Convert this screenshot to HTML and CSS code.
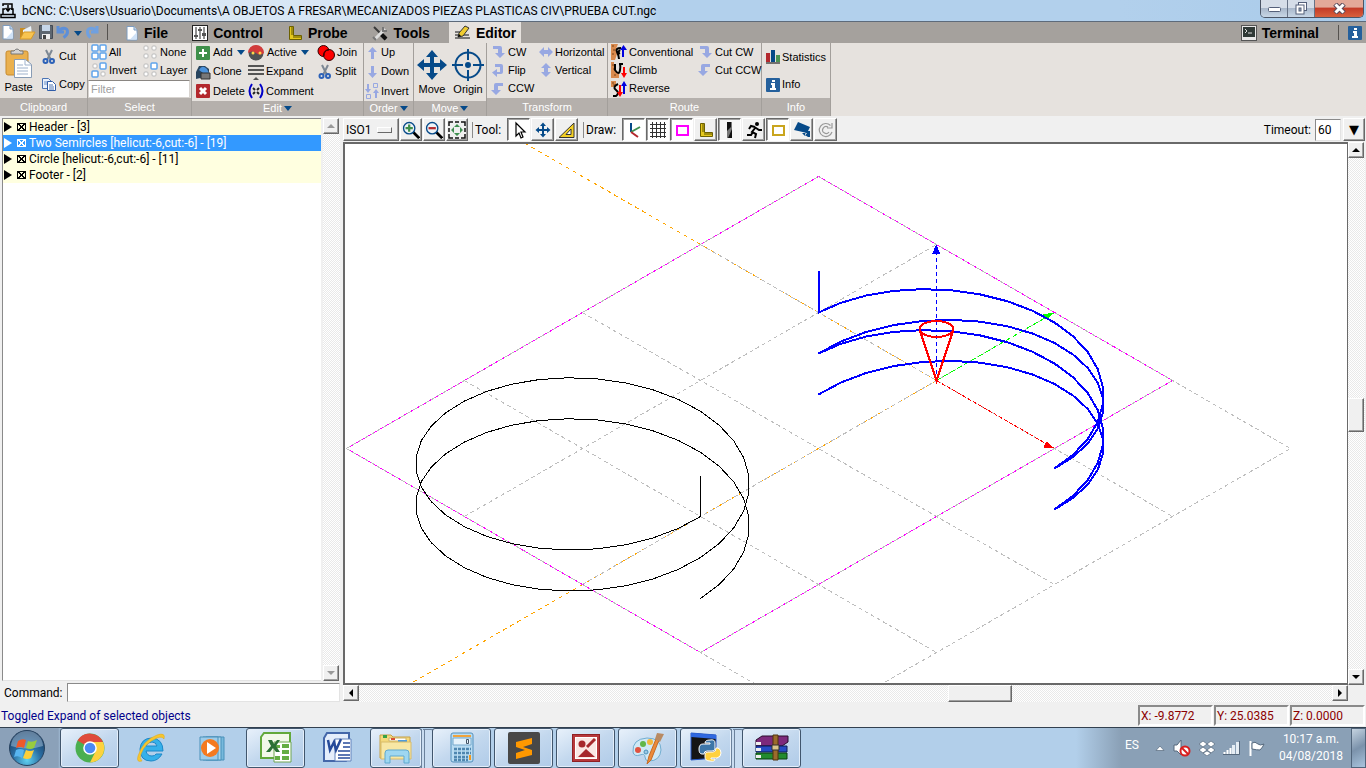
FILE: index.html
```html
<!DOCTYPE html>
<html lang="en">
<head>
    <meta charset="UTF-8">
    <meta name="viewport" content="width=device-width, initial-scale=1.0">
    <title>bCNC</title>
    <link rel="stylesheet" href="styles.css">
</head>
<body>
    <!-- icons used more than once -->
    <svg class="defs">
        <symbol id="i-new" viewBox="0 0 16 16"><path d="M3 1.500h7l3 3.500v10H3z" fill="#fff" stroke="#7d9cc0"/><path d="M10 1.500v3.500h3" fill="#c7dcf2" stroke="#7d9cc0"/><path d="M6 14.500h7V7z" fill="#cfe2f7"/></symbol>
        <symbol id="i-scissors" viewBox="0 0 16 16"><path d="M5 1l5 10M11 1L6 11" stroke="#7d8894" stroke-width="2"/><circle cx="4.500" cy="12" r="2" fill="none" stroke="#2d62b8" stroke-width="2"/><circle cx="11" cy="12" r="2" fill="none" stroke="#2d62b8" stroke-width="2"/></symbol>
        <symbol id="i-info" viewBox="0 0 14 14"><rect width="14" height="14" rx="1" fill="#25609c"/><path d="M6 2h3v2H6zM5 5h4v5h1v2H4v-2h2V7H5z" fill="#fff"/></symbol>
        <symbol id="i-cw" viewBox="0 0 16 16"><path d="M3 2h7q2 0 2 2v5h3l-5 5-5-5h3V5H3z" fill="#98a8e2"/></symbol>
        <symbol id="i-ccw" viewBox="0 0 16 16"><path d="M13 2H6Q4 2 4 4v5H1l5 5 5-5H8V5h5z" fill="#98a8e2"/></symbol>
        <symbol id="i-down" viewBox="0 0 16 16"><path d="M7 2h3v7h3l-4.500 5L4 9h3z" fill="#98a8e2"/></symbol>
        <symbol id="i-move" viewBox="0 0 32 32"><path d="M16 1l6 7h-4v6h6v-4l7 6-7 6v-4h-6v6h4l-6 7-6-7h4v-6H8v4l-7-6 7-6v4h6V8h-4z" fill="#064a89"/></symbol>
        <symbol id="i-ruler" viewBox="0 0 16 16"><path d="M2.500 1.500h4v9h8v4h-12z" fill="#e5c81c" stroke="#6c6000"/><path d="M4 3h2M4 5h2M4 7h2M4 9h2M7 13v-2M9 13v-2M11 13v-2M13 13v-2" stroke="#5d5200"/></symbol>
        <symbol id="i-lens" viewBox="0 0 20 20"><path d="M12 12l7 7" stroke="#000" stroke-width="3"/><circle cx="8" cy="8" r="6.200" fill="#eef3f7" stroke="#064a89" stroke-width="1.500"/></symbol>
    </svg>

    <header class="titlebar">
        <svg class="app-icon" width="17" height="17" viewBox="0 0 17 17"><path d="M3 4V2h9v6M5.500 6L8 9l2.500-3M8 3v5M3 12V7h2M11 7h2v5M1 12.500h14v3H1z" fill="none" stroke="#000" stroke-width="1.500"/></svg>
        <h1>bCNC: C:\Users\Usuario\Documents\A OBJETOS A FRESAR\MECANIZADOS PIEZAS PLASTICAS CIV\PRUEBA CUT.ngc</h1>
        <div class="window-buttons">
            <button aria-label="Minimize"><svg width="13" height="9"><rect x=".5" y="3.500" width="12" height="4" rx="1" fill="#fff" stroke="#55607a"/></svg></button>
            <button aria-label="Restore"><svg width="13" height="13"><rect x="3.500" y=".5" width="8" height="8" fill="#fff" stroke="#55607a"/><rect x="1" y="3" width="8" height="9" fill="#fff" stroke="#55607a"/><rect x="4" y="6" width="2" height="3" fill="#9ab" stroke="#55607a"/></svg></button>
            <button class="close" aria-label="Close"><svg width="13" height="11"><path d="M2 1l9 9M11 1l-9 9" stroke="#5a4a5a" stroke-width="5"/><path d="M2.500 1.500l8 8M10.500 1.500l-8 8" stroke="#fff" stroke-width="3"/></svg></button>
        </div>
    </header>

    <nav class="tabbar">
        <div class="quick">
            <button aria-label="New"><svg width="16" height="16"><use href="#i-new"/></svg></button>
            <button aria-label="Open"><svg width="18" height="16"><path d="M2 14V4h5l1 2h6v8z" fill="#c98c20"/><path d="M5 6l8-4 1 8-9 2z" fill="#e9f1f8"/><path d="M2 15L6 8h11l-4 7z" fill="#f8c450" stroke="#d79a28"/></svg></button>
            <button aria-label="Save"><svg width="16" height="16"><path d="M1.500 1.500h13v13h-13z" fill="#5d6670" stroke="#444b55"/><path d="M4 1h8v6H4z" fill="#c6d6e8"/><path d="M4 10h8v5H4z" fill="#eee"/><path d="M5 11h3v4H5z" fill="#444"/></svg></button>
            <button aria-label="Undo"><svg width="14" height="16"><path d="M2 2v6h6M2.500 7.500C5 3 12 3 11.500 8c0 3-2 4-4 5.500" fill="none" stroke="#5d8fd8" stroke-width="3"/></svg></button>
            <button aria-label="Undo list"><i class="caret"></i></button>
            <button aria-label="Redo"><svg width="16" height="16"><path d="M13 2v6H7M12.500 7.500C10 3 3 3 3.500 8c0 3 1 4 3 5.500" fill="none" stroke="#6fa0e0" stroke-width="3"/></svg></button>
        </div>
        <button class="tab"><svg width="14" height="16" viewBox="1 0 14 16"><use href="#i-new" width="16" height="16"/></svg>File</button>
        <button class="tab"><svg width="16" height="16"><rect x=".5" y=".5" width="15" height="15" fill="#fff" stroke="#222"/><path d="M4 2v12M8 2v12M12 2v12" stroke="#222"/><path d="M2 10h4v2H2zM6 4h4v2H6zM10 8h4v3h-4z" fill="#555"/></svg>Control</button>
        <button class="tab"><svg width="16" height="16"><use href="#i-ruler"/></svg>Probe</button>
        <button class="tab"><svg width="17" height="16"><path d="M2 2l12 12" stroke="#3a3a3a" stroke-width="2"/><path d="M9 9l5 5" stroke="#111" stroke-width="4"/><path d="M3 14L13 4" stroke="#ddd" stroke-width="3"/><path d="M11 2v4h4M1 12l3 3" fill="none" stroke="#777" stroke-width="2"/></svg>Tools</button>
        <button class="tab active"><svg width="17" height="16"><path d="M1 7h5M1 10h14M1 13h15" stroke="#555" stroke-width="1.500"/><path d="M4 12l1-4 6-7 4 2-6 8z" fill="#f0cc30" stroke="#333"/><path d="M4 12l1-3 2 2z" fill="#000"/></svg>Editor</button>
        <div class="tabbar-right">
            <button class="tab"><svg width="16" height="16"><rect x=".5" y=".5" width="15" height="15" fill="#e8e8e8" stroke="#555"/><path d="M2 2h12v10H2z" fill="#2f3936"/><path d="M4 4l2 2-2 2M7 8h4" fill="none" stroke="#ddd"/></svg>Terminal</button>
            <button class="about" aria-label="About"><svg width="14" height="14"><use href="#i-info"/></svg></button>
        </div>
    </nav>

    <section class="ribbon">
        <div class="group clipboard">
            <div class="tools">
                <button class="big"><svg width="32" height="32"><rect x="3" y="4" width="22" height="24" rx="2" fill="#eab04e" stroke="#c78a2c"/><path d="M8 7V4h3q3-4 6 0h3v3z" fill="#d4d4d4" stroke="#777"/><path d="M11.500 12.500h11l6 5v13h-17z" fill="#fff" stroke="#889cb5"/><path d="M22 12v6h6M14 18h6M14 21h11M14 24h11M14 27h11" fill="none" stroke="#9fb2cc"/></svg>Paste</button>
                <button><svg width="16" height="16"><use href="#i-scissors"/></svg>Cut</button>
                <button><svg width="16" height="16"><path d="M1.500 2.500h6l3 3v7h-9z" fill="#e8f0fb" stroke="#4c74b4"/><path d="M3 6h5M3 8h5" stroke="#6d90c8"/><path d="M6.500 5.500h5l3 3v6h-8z" fill="#fff" stroke="#2f5ca8"/><path d="M8 9h4M8 11h5M8 13h5" stroke="#4c74b4"/></svg>Copy</button>
            </div>
            <div class="caption">Clipboard</div>
        </div>
        <div class="group select">
            <div class="tools">
                <button><svg width="16" height="16" fill="#fff" stroke="#5fa4ec" stroke-width="1.500"><rect x="1" y="1" width="6" height="6" rx="1"/><rect x="9" y="1" width="6" height="6" rx="1"/><rect x="1" y="9" width="6" height="6" rx="1"/><rect x="9" y="9" width="6" height="6" rx="1"/></svg>All</button>
                <button><svg width="16" height="16" fill="#fff" stroke="#bbb"><rect x="2" y="2" width="4" height="4" rx="1"/><rect x="10" y="2" width="4" height="4" rx="1"/><rect x="2" y="10" width="4" height="4" rx="1"/><rect x="10" y="10" width="4" height="4" rx="1"/></svg>None</button>
                <button><svg width="16" height="16" fill="#fff" stroke="#bbb"><rect x="2" y="2" width="4" height="4" rx="1"/><rect x="10" y="10" width="4" height="4" rx="1"/><g stroke="#5fa4ec" stroke-width="1.500"><rect x="9" y="1" width="6" height="6" rx="1"/><rect x="1" y="9" width="6" height="6" rx="1"/></g></svg>Invert</button>
                <button><svg width="16" height="16" fill="#fff" stroke="#bbb"><rect x="2" y="2" width="4" height="4" rx="1"/><rect x="2" y="10" width="4" height="4" rx="1"/><rect x="10" y="10" width="4" height="4" rx="1"/><rect x="9" y="1" width="6" height="6" rx="1" stroke="#5fa4ec" stroke-width="1.500"/></svg>Layer</button>
                <input type="text" placeholder="Filter" aria-label="Filter">
            </div>
            <div class="caption">Select</div>
        </div>
        <div class="group edit">
            <div class="tools">
                <button><svg width="16" height="16"><rect x="1" y="1" width="14" height="14" rx="1" fill="#3f8f4a"/><path d="M8 4v8M4 8h8" stroke="#fff" stroke-width="2"/></svg>Add<i class="caret"></i></button>
                <button><svg width="17" height="16"><circle cx="8" cy="8" r="7.500" fill="#4f5254"/><path d="M0 8a8 8 0 0 1 16 0q-4 3-8 0T0 8" fill="#d23b3b"/><circle cx="5" cy="8" r="1.500" fill="#ffd54a"/><circle cx="12" cy="8" r="1.500" fill="#ffd54a"/></svg>Active<i class="caret"></i></button>
                <button><svg width="18" height="16" fill="#f00" stroke="#300"><circle cx="6.500" cy="6" r="5.500"/><circle cx="12" cy="10" r="5.500"/><path d="M7 11q0-6 5-6" fill="none"/></svg>Join</button>
                <button><svg width="16" height="16"><path d="M1 15V8l3-6h6l4 3v7" fill="#29455f"/><path d="M4 6q3-6 8-1l2 4H8z" fill="#4c93dc"/><path d="M6 9h9v6H6z" fill="#777" stroke="#333"/></svg>Clone</button>
                <button><svg width="16" height="16"><path d="M0 2h16M0 6h16M0 10h16" stroke="#555" stroke-width="2"/><path d="M8 13l3 3H5z" fill="#555"/></svg>Expand</button>
                <button><svg width="16" height="16"><use href="#i-scissors"/></svg>Split</button>
                <button><svg width="16" height="16"><rect x="1" y="1" width="14" height="14" rx="1" fill="#b3282d"/><path d="M5 5l6 6M11 5l-6 6" stroke="#fff" stroke-width="3"/></svg>Delete</button>
                <button class="wide"><svg width="16" height="16"><path d="M4 1Q-1 8 4 15M12 1q5 7 0 14" fill="none" stroke="#0000c8" stroke-width="2"/><path d="M5 5l2 2M11 5L9 7M5 11l2-2M11 11L9 9" stroke="#222" stroke-width="2"/></svg>Comment</button>
            </div>
            <button class="caption">Edit<i class="caret"></i></button>
        </div>
        <div class="group order">
            <div class="tools">
                <button><svg width="14" height="16"><path d="M6 14h3V7h3L7.500 2 3 7h3z" fill="#98a8e2"/></svg>Up</button>
                <button><svg width="14" height="16" viewBox="1 0 14 16"><use href="#i-down" width="16" height="16"/></svg>Down</button>
                <button><svg width="14" height="16" fill="#98a8e2"><path d="M2 1h2v5h2L3 10 0 6h2zM10 15h2v-5h2l-3-4-3 4h2z"/><path d="M8.500 .5h4v4h-4zM1.500 11.500h4v4h-4z" fill="none" stroke="#98a8e2"/></svg>Invert</button>
            </div>
            <button class="caption">Order<i class="caret"></i></button>
        </div>
        <div class="group move">
            <div class="tools">
                <button class="big"><svg width="32" height="32"><use href="#i-move"/></svg>Move</button>
                <button class="big"><svg width="32" height="32" fill="none" stroke="#064a89" stroke-width="2"><circle cx="16" cy="16" r="12.500"/><path d="M16 0v11M16 21v11M0 16h11M21 16h11"/><circle cx="16" cy="16" r="2" fill="#064a89"/></svg>Origin</button>
            </div>
            <button class="caption">Move<i class="caret"></i></button>
        </div>
        <div class="group transform">
            <div class="tools">
                <button><svg width="16" height="16"><use href="#i-cw"/></svg>CW</button>
                <button><svg width="14" height="16"><path d="M0 8l5-5v3h4V3l5 5-5 5v-3H5v3z" fill="#98a8e2"/></svg>Horizontal</button>
                <button><svg width="16" height="16"><path d="M5 2h6q2 0 2 2v6q0 2-2 2H7v3L2 10.500 7 7v3h3V5H5z" fill="#98a8e2"/></svg>Flip</button>
                <button><svg width="14" height="16"><path d="M7 1l5 5H9v4h3l-5 5-5-5h3V6H2z" fill="#98a8e2"/></svg>Vertical</button>
                <button><svg width="16" height="16"><use href="#i-ccw"/></svg>CCW</button>
            </div>
            <div class="caption">Transform</div>
        </div>
        <div class="group route">
            <div class="tools">
                <button><svg width="16" height="16"><path d="M0 0h7l-2 5 1 5-2 6H0z" fill="#d98a4e"/><path d="M1 2h2M2 6h2M1 10h2" stroke="#7b4518"/><path d="M10 4Q4 4 6 8t2 7M9 6q-5 5 0 3" fill="none" stroke="#000" stroke-width="2"/><path d="M12 13V6" stroke="#0000e0" stroke-width="2"/><path d="M9 6l3.500-5L16 6z" fill="#0000e0"/></svg>Conventional</button>
                <button><svg width="16" height="16"><use href="#i-cw"/></svg>Cut CW</button>
                <button><svg width="16" height="16"><path d="M0 0h3v8l5 4v4H0z" fill="#d98a4e"/><path d="M1 3h2M2 7h2M3 13h2" stroke="#7b4518"/><path d="M4 2v6q4 6 5 0t-1-6h4" fill="none" stroke="#000" stroke-width="2"/><path d="M13 5v7" stroke="#f00" stroke-width="2"/><path d="M10 11h6l-3 5z" fill="#f00"/></svg>Climb</button>
                <button><svg width="16" height="16"><use href="#i-ccw"/></svg>Cut CCW</button>
                <button><svg width="16" height="16"><path d="M0 0h5v6H0z" fill="#d98a4e"/><path d="M1 2h2M2 4h2" stroke="#7b4518"/><path d="M7 3Q1 6 5 9t0 6H2" fill="none" stroke="#000" stroke-width="2"/><path d="M9 4v8" stroke="#f00" stroke-width="2"/><path d="M6 11h6l-3 5z" fill="#f00"/><path d="M13 13V4" stroke="#0000e0" stroke-width="2"/><path d="M10 5l3-5 3 5z" fill="#0000e0"/></svg>Reverse</button>
            </div>
            <div class="caption">Route</div>
        </div>
        <div class="group info">
            <div class="tools">
                <button><svg width="14" height="16"><path d="M0 4h4v9H0z" fill="#b3282d"/><path d="M5 1h4v12H5z" fill="#064a89"/><path d="M10 6h4v7h-4z" fill="#4c9454"/><path d="M0 14h14" stroke="#000"/></svg>Statistics</button>
                <button><svg width="14" height="14"><use href="#i-info"/></svg>Info</button>
            </div>
            <div class="caption">Info</div>
        </div>
    </section>

    <main>
        <aside>
            <div class="program">
                <ul class="blocks">
                    <li><b></b><i></i>Header - [3]</li>
                    <li class="selected"><b></b><i></i>Two Semircles [helicut:-6,cut:-6] - [19]</li>
                    <li><b></b><i></i>Circle [helicut:-6,cut:-6] - [11]</li>
                    <li><b></b><i></i>Footer - [2]</li>
                </ul>
                <div class="scroll vertical disabled">
                    <button class="arrow up" aria-label="Scroll up"></button>
                    <span class="trough"></span>
                    <button class="arrow down" aria-label="Scroll down"></button>
                </div>
            </div>
            <div class="command">
                <label for="command">Command:</label>
                <input type="text" id="command">
            </div>
        </aside>

        <section class="view">
            <div class="viewbar">
                <div class="option-menu">
                    <select aria-label="View"><option>ISO1</option></select>
                    <span class="indicator"></span>
                </div>
                <button aria-label="Zoom in"><svg width="20" height="20" viewBox="-1 -1 22 22"><use href="#i-lens" width="20" height="20"/><path d="M8 4v8M4 8h8" stroke="#3f8f4a" stroke-width="2.500"/></svg></button>
                <button aria-label="Zoom out"><svg width="20" height="20" viewBox="-1 -1 22 22"><use href="#i-lens" width="20" height="20"/><path d="M4 8h8" stroke="#b3282d" stroke-width="2.500"/></svg></button>
                <button aria-label="Fit"><svg width="18" height="18"><path d="M1 5V1h4M13 1h4v4M17 13v4h-4M5 17H1v-4M7 1h4M7 17h4M1 7v4M17 7v4" fill="none" stroke="#111" stroke-width="1.500"/><path d="M9 3l3 3H6zM9 15l3-3H6zM3 9l3-3v6zM15 9l-3-3v6z" fill="#3f9050"/></svg></button>
                <span class="legend">Tool:</span>
                <button class="on" aria-label="Select"><svg width="20" height="18"><path d="M7 2v13l3-3 2 5 2-1-2-5h4z" fill="#fff" stroke="#000" stroke-width="1.200"/></svg></button>
                <button aria-label="Pan"><svg width="16" height="16"><use href="#i-move"/></svg></button>
                <button aria-label="Measure"><svg width="20" height="18"><path d="M2 16.500h15V2z" fill="#f3cf25" stroke="#333"/><path d="M9 13.500h5V8z" fill="#fff" stroke="#333"/></svg></button>
                <span class="legend">Draw:</span>
                <button class="on" aria-label="Axes"><svg width="18" height="18" fill="none" stroke-width="2"><path d="M6 2v9" stroke="#064a89"/><path d="M6 11l9-5" stroke="#3f9050"/><path d="M6 11l7 5" stroke="#b3282d"/></svg></button>
                <button class="on" aria-label="Grid"><svg width="18" height="18"><path d="M3.500 1v16M7.500 1v16M11.500 1v16M15.500 1v16M1 3.500h16M1 7.500h16M1 11.500h16M1 15.500h16" stroke="#333"/></svg></button>
                <button class="on" aria-label="Margin"><svg width="18" height="18"><rect x="4" y="5" width="11" height="9" fill="#fff" stroke="#f0f" stroke-width="2"/></svg></button>
                <button aria-label="Probe"><svg width="16" height="16"><use href="#i-ruler"/></svg></button>
                <button class="on grey" aria-label="Path"><svg width="18" height="18"><path d="M6 1h5v16H6z" fill="#777"/><path d="M6 1h4v5l-4 4zM11 8v9H7z" fill="#111"/></svg></button>
                <button aria-label="Rapid"><svg width="18" height="18"><circle cx="12" cy="3" r="2"/><path d="M11 6l-4 5 4 2-1 4M8 11l-2 3H2M10 6L6 5 4 8M11 7l3 2h3" fill="none" stroke="#000" stroke-width="2"/></svg></button>
                <button class="on" aria-label="Workspace"><svg width="18" height="18"><rect x="4" y="5" width="11" height="9" fill="#fff" stroke="#c9a51e" stroke-width="2"/></svg></button>
                <button aria-label="Camera"><svg width="18" height="18"><path d="M5 1l12 5-3 6L1 9zM9 12l3 3 2-3zM13 10h4v6h-2l-3-2z" fill="#064a89"/></svg></button>
                <button aria-label="Refresh"><svg width="18" height="18" fill="none"><path d="M15 11a6.500 6.500 0 1 1-1.500-6.500M15 2v5h-5M12 11a3.500 3.500 0 1 1-1-5" stroke="#999" stroke-width="1.200"/></svg></button>
                <div class="timeout">
                    <label for="timeout">Timeout:</label>
                    <input type="text" id="timeout" value="60">
                    <button aria-label="Timeout list">▼</button>
                </div>
            </div>
            <div class="canvas-row">
                <div class="canvas">
                    <svg id="plot" width="100%" height="100%" shape-rendering="crispEdges" fill="none"></svg>
                </div>
                <div class="scroll vertical">
                    <button class="arrow up" aria-label="Scroll up"></button>
                    <span class="trough"><span class="thumb"></span></span>
                    <button class="arrow down" aria-label="Scroll down"></button>
                </div>
            </div>
            <div class="scroll horizontal">
                <button class="arrow left" aria-label="Scroll left"></button>
                <span class="trough"><span class="thumb"></span></span>
                <button class="arrow right" aria-label="Scroll right"></button>
            </div>
        </section>
    </main>

    <div class="statusbar">
        <span class="message">Toggled Expand of selected objects</span>
        <span class="coord">X: -9.8772</span>
        <span class="coord">Y: 25.0385</span>
        <span class="coord">Z: 0.0000</span>
    </div>

    <footer class="taskbar">
        <button class="start" aria-label="Start"><svg width="38" height="38"><defs><radialGradient id="orb" cx=".5" cy=".85" r=".8"><stop offset="0" stop-color="#5fd0f0"/><stop offset=".5" stop-color="#2a6ea3"/><stop offset="1" stop-color="#1a3a5e"/></radialGradient></defs><circle cx="19" cy="19" r="17.500" fill="url(#orb)" stroke="#27425f"/><path d="M3 17a16 15 0 0 1 32 0q-16 5-32 0" fill="#a9c6dd" opacity=".5"/><path d="M10 12q4-3 8-1l-2 8q-4-2-8 0z" fill="#f0592a"/><path d="M20 12q4 2 9-1l-3 8q-4 2-8 0z" fill="#98cc3e"/><path d="M8 21q4-2 8 0l-2 8q-4-3-8-1z" fill="#58b5f0"/><path d="M18 21q4 2 8 0l-3 8q-4 2-8 0z" fill="#fdcf3a"/></svg></button>
        <button class="task open" aria-label="Chrome"><svg width="32" height="32"><circle cx="16" cy="16" r="14.500" fill="#4aaf50"/><path d="M16 16L3.500 8.500A14.500 14.500 0 0 1 29 10H16z" fill="#df4b3b"/><path d="M16 10h13a14.500 14.500 0 0 1-13 20.500l6-12z" fill="#fdd23e"/><circle cx="16" cy="16" r="6.800" fill="#fff"/><circle cx="16" cy="16" r="5.300" fill="#4a8af4"/></svg></button>
        <button class="task" aria-label="Internet Explorer"><svg width="34" height="32"><path d="M27 22q-4 7-11 7-11 0-11-12Q6 6 17 6q11 1 11 13H11q1 5 6 5 3 0 4-2zM11 14h11q-1-4-5-4-5 0-6 4z" fill="#35b0ea" stroke="#1d88c8"/><path d="M7 29q-6 2-4-5Q8 8 22 3q9-3 7 4-2-3-7-1Q10 11 6 22q-2 4 1 7" fill="#f7c62e" stroke="#dda61c" stroke-width=".5"/></svg></button>
        <button class="task" aria-label="Media Player"><svg width="32" height="32"><path d="M8 5h18v23H8z" fill="#77b9dc" stroke="#4a91ba"/><path d="M5 5h18v23H5z" fill="#a9d5ec" stroke="#4a91ba"/><path d="M2 5h18v23H2z" fill="#9dccea" stroke="#4a91ba"/><circle cx="12" cy="16" r="9" fill="#f47a20"/><path d="M9 10l9 6-9 6z" fill="#fff"/></svg></button>
        <button class="task open" aria-label="Excel"><svg width="32" height="32"><path d="M4 1h26v22l-3 3H1V5z" fill="#f2f8ea" stroke="#62a83c" stroke-width="2"/><path d="M14 10h17v20H14z" fill="#fff" stroke="#6ea650"/><path d="M16 13h4v3h-4zM22 12h7v4h-7zM22 18h7v4h-7zM22 24h7v4h-7zM15 24h5v4h-5z" fill="#65ad44"/><path d="M8 8h4l2 4 3-4h3l-4 6 4 6h-4l-3-4-3 4H6l5-6z" fill="#2b7036"/></svg></button>
        <button class="task" aria-label="Word"><svg width="32" height="32"><path d="M5 1h22v24l-3 4H2V6z" fill="#e5eefb" stroke="#4467a9" stroke-width="2"/><path d="M13 7h16v22H13z" fill="#fff" stroke="#6384bd"/><path d="M21 11h7M21 15h7M16 19h12M16 23h12M16 26h12" stroke="#274b9a" stroke-width="1.500"/><path d="M6 8l2 10 4-8 2 8 5-11" fill="none" stroke="#274b9a" stroke-width="2.500"/></svg></button>
        <button class="task open stacked" aria-label="Explorer"><svg width="34" height="32"><path d="M1 3h11l2 2h17v21H1z" fill="#f4d97c" stroke="#c6a146"/><path d="M4 3h4v3H4z" fill="#36a344"/><path d="M10 6h17v3H10z" fill="#fff" stroke="#ccb36a"/><path d="M12 6h4v2h-4z" fill="#d94f35"/><path d="M19 8h9v2h-9z" fill="#4e9bdc"/><path d="M2 10h30v17H2z" fill="#f8e7a4" stroke="#d8bb68"/><path d="M6 31V21q0-3 3-3h18q3 0 3 3v10h-5v-7H11v7z" fill="#9ed7f1" stroke="#5fa9d0"/></svg></button>
        <button class="task open" aria-label="Calculator"><svg width="32" height="32"><rect x="5" y="1" width="22" height="29" rx="2" fill="#b9dcf2" stroke="#5390bc"/><path d="M7 3h18v2H7z" fill="#f0a33c"/><path d="M7 6h18v7H7z" fill="#e5f2fb" stroke="#74a8cc"/><path d="M20.500 7.500h2v4h-2z" fill="none" stroke="#456"/><path d="M8 17h17M8 21h17M8 25h14M8 28h14" stroke="#4f87b0" stroke-width="2.500" stroke-dasharray="3 1"/><path d="M23 23h2v5h-2z" fill="#f39a20"/></svg></button>
        <button class="task open" aria-label="Sublime Text"><svg width="32" height="32"><rect width="32" height="32" rx="2" fill="#484848"/><path d="M24 6v6l-9 3 9 3v5L8 27v-6l9-3-9-3v-5z" fill="#ff9800"/></svg></button>
        <button class="task open" aria-label="Drawing"><svg width="32" height="32"><rect x="2.500" y="2.500" width="27" height="27" fill="#b7383b" stroke="#8f2024"/><rect x="5.500" y="5.500" width="21" height="21" fill="#fae7e4" stroke="#fff"/><circle cx="12" cy="12" r="3.500" fill="#a6282c"/><path d="M17 15l8-8" stroke="#a6282c" stroke-width="3"/><path d="M8 25l8-8 9 8z" fill="#a6282c"/></svg></button>
        <button class="task open" aria-label="Paint"><svg width="34" height="32"><path d="M16 6q14 0 14 12-1 11-12 11-4 0-4-4t-5-2q-6 2-7-3Q1 7 16 6z" fill="#cfe8f5" stroke="#71add0"/><circle cx="7" cy="18" r="3" fill="#e0523f"/><circle cx="12" cy="12" r="3" fill="#61b648"/><circle cx="19" cy="10" r="3" fill="#f3b83d"/><circle cx="15" cy="20" r="2" fill="#9cc7e4" stroke="#4a91ba"/><path d="M28 8l-8 20-4 4 2-8 7-17z" fill="#ec8b3a" stroke="#c56a24"/><path d="M24 7l2-6 7 1-4 8z" fill="#b88a63"/></svg></button>
        <button class="task open stacked" aria-label="Python"><svg width="32" height="32"><path d="M1 1l25 2v23L1 28z" fill="#151515" stroke="#2658c8"/><path d="M1 1l25 2v4L1 5z" fill="#2f68e0"/><path d="M20 8q5-1 5 3v6q0 2-3 2h-5q-3 0-3 3h-2q-3 0-3-5t4-5h7v-1h-5q0-3 5-3z" fill="#3d76a8" stroke="#fff"/><path d="M20 29q-5 0-5-4v-3q0-2 3-2h5q3 0 3-4h2q3 1 3 5t-4 5h-6v1h4q0 3-5 2z" fill="#ffd140" stroke="#fff"/></svg></button>
        <button class="task open" aria-label="WinRAR"><svg width="34" height="32"><path d="M1 8l6-4h26v6l-6 4H1z" fill="#7d2a7c" stroke="#2b0d2b"/><path d="M1 14h31v6H1z" fill="#274bc4" stroke="#0d1d57"/><path d="M1 21h31v6H1z" fill="#228b2e" stroke="#0a3d10"/><path d="M1 10h5v3H1zM1 16h5v3H1zM1 23h5v3H1z" fill="#eee"/><path d="M18 3h5v25h-5z" fill="#9b6b2c" stroke="#50340f"/><path d="M17 13h7v5h-7z" fill="#d9c48b" stroke="#333"/></svg></button>
        <div class="tray">
            <span class="lang">ES</span>
            <svg width="10" height="8"><path d="M1 6.500h8L5 2z" fill="#fff" stroke="#56697d" stroke-width=".7"/></svg>
            <svg width="18" height="18"><path d="M1 6h3l4-5v15l-4-4H1z" fill="#fff" stroke="#56697d"/><circle cx="12" cy="12" r="4.500" fill="#fff" stroke="#d81f1f" stroke-width="2"/><path d="M9 9l6 6" stroke="#d81f1f" stroke-width="2"/></svg>
            <svg width="16" height="16"><path d="M4 1l4 3-4 3-4-3zM12 1l4 3-4 3-4-3zM4 7l4 3-4 3-4-3zM12 7l4 3-4 3-4-3zM8 11l4 2-4 3-4-3z" fill="#fff" stroke="#56697d" stroke-width=".7"/></svg>
            <svg width="17" height="14"><path d="M1.500 13v-2M4.500 13V9M7.500 13V7" stroke="#fff" stroke-width="2"/><path d="M10.500 13V4M14.500 13V1" stroke="#e5edf4" stroke-width="3"/><path d="M0 13.500h16.500V0" fill="none" stroke="#56697d"/></svg>
            <svg width="17" height="17"><path d="M2.500 1v15" stroke="#fff" stroke-width="2"/><path d="M4 3q3-2 6 1 2 2 6 0-1 3-4 6-3 0-8-1z" fill="#fff" stroke="#56697d"/></svg>
            <div class="clock">10:17 a.m.<br>04/08/2018</div>
            <button class="desktop" aria-label="Show desktop"></button>
        </div>
    </footer>
    <script src="plot.js"></script>
</body>
</html>
```
FILE: styles.css
```css
* {
    box-sizing: border-box;
}
body {
    margin: 0;
    height: 100vh;
    display: flex;
    flex-direction: column;
    overflow: hidden;
    background: #f0f0f0;
    color: #000;
    font: 12px/16px Roboto, "Noto Sans", sans-serif;
}
button, input, select {
    font: inherit;
    color: inherit;
    margin: 0;
    padding: 0;
    border: 0;
    border-radius: 0;
    background: none;
}
svg {
    display: block;
    flex: none;
}
.defs {
    position: absolute;
    width: 0;
    height: 0;
}
.caret {
    display: inline-block;
    border: 4px solid transparent;
    border-top: 5px solid #064a89;
    border-bottom: 0;
    margin-left: 2px;
}

/* title bar */
.titlebar {
    flex: none;
    height: 22px;
    display: flex;
    align-items: center;
    background: linear-gradient(90deg, #dce9f6, #d3e3f3 620px, #b2d0ec 660px, #b2d0ec 1120px, #a9cbea);
    border-bottom: 1px solid #5d6a7a;
}
.app-icon {
    margin-right: 5px;
}
.titlebar h1 {
    margin: 0;
    flex: 1;
    min-width: 0;
    font-size: 12px;
    font-weight: normal;
    white-space: nowrap;
}
.window-buttons {
    align-self: flex-start;
    display: flex;
    height: 18px;
    margin-right: 2px;
    border: 1px solid #4b5566;
    border-top: 0;
    border-radius: 0 0 5px 5px;
    overflow: hidden;
}
.window-buttons button {
    width: 27px;
    display: flex;
    align-items: center;
    justify-content: center;
    background: linear-gradient(#d5dde8 45%, #a9b8cb 50%, #c8d6e6);
    border-right: 1px solid #667286;
}
.window-buttons .close {
    width: 48px;
    border: 0;
    background: linear-gradient(#e3a898 40%, #c43c28 50%, #d9603c);
}

/* tabs */
.tabbar {
    flex: none;
    height: 21px;
    display: flex;
    align-items: stretch;
    background: #a5a19d;
}
.quick {
    display: flex;
    align-items: center;
    gap: 2px;
    width: 108px;
    margin: 2px 12px 3px 0;
    border-right: 1px solid #55524f;
}
.tab {
    display: flex;
    align-items: center;
    gap: 5px;
    padding: 0 5px;
    margin-right: 14px;
    font: bold 14px/20px "Liberation Sans", sans-serif;
}
.tab.active {
    background: #e6e2de;
}
.tabbar-right {
    margin-left: auto;
    display: flex;
}
.about {
    padding: 0 4px 0 9px;
    border-left: 1px solid #55524f;
    margin: 3px 0;
}

/* ribbon */
.ribbon {
    flex: none;
    height: 73px;
    display: flex;
    background: #e6e2de;
    font: 11px/13px "Liberation Sans", sans-serif;
}
.group {
    display: flex;
    flex-direction: column;
    border-right: 1px solid #a39f9b;
}
.tools {
    flex: 1;
    min-height: 0;
    display: grid;
    padding-left: 3px;
}
.tools button {
    display: flex;
    align-items: center;
    gap: 2px;
    white-space: nowrap;
}
.tools .big {
    flex-direction: column;
    justify-content: center;
}
.caption {
    height: 18px;
    display: flex;
    align-items: center;
    justify-content: center;
    background: #b5b0ac;
    color: #fff;
}
button.caption {
    height: 15px;
}
.clipboard {
    width: 88px;
}
.clipboard .tools {
    grid-template-columns: 37px 1fr;
    padding-left: 0;
}
.clipboard .big {
    grid-row: span 2;
}
.clipboard .tools button + button {
    padding-left: 4px;
}
.select {
    width: 104px;
}
.select .tools {
    grid-template: 18px 18px 1fr / 51px 1fr;
}
.select input {
    grid-column: span 2;
    margin: 1px 1px 0 -3px;
    padding-left: 2px;
    min-width: 0;
    background: #fff;
    border: 1px solid #d8d4d0;
    border-top-color: #8a8682;
}
.select input::placeholder {
    color: #a0a0a0;
}
.edit {
    width: 172px;
}
.edit .tools {
    grid-template-columns: 53px 69px 1fr;
}
.edit .wide {
    grid-column: span 2;
}
.order {
    width: 50px;
}
.order .tools {
    padding-left: 1px;
}
.move {
    width: 73px;
}
.move .tools {
    grid-template-columns: 34px 34px;
    padding-left: 1px;
    column-gap: 2px;
}
.transform {
    width: 121px;
}
.transform .tools {
    grid-template-columns: 49px 1fr;
}
.route {
    width: 154px;
}
.route .tools {
    grid-template-columns: 86px 1fr;
}
.info {
    width: 69px;
}
.info .tools {
    padding-left: 4px;
}

/* work area */
main {
    flex: 1;
    min-height: 0;
    display: flex;
}
aside {
    flex: 0 0 340px;
    display: flex;
    flex-direction: column;
    padding: 2px 0 2px 2px;
}
.program {
    flex: 1;
    display: flex;
    gap: 2px;
    min-height: 0;
}
.blocks {
    flex: 1;
    margin: 0;
    padding: 0;
    list-style: none;
    background: #fff;
    border: 1px solid #8a8a8a;
    border-right: 0;
    border-bottom-color: #e3e3e3;
}
.blocks li {
    display: flex;
    align-items: center;
    height: 16px;
    padding-left: 1px;
    background: #ffffe0;
    white-space: pre;
}
.blocks .selected {
    background: #3399ff;
    color: #fff;
}
.blocks b {
    border: 5px solid transparent;
    border-left: 8px solid;
    border-right: 0;
    margin-right: 5px;
}
.blocks i {
    width: 9px;
    height: 8px;
    margin-right: 3px;
    border: 1px solid;
    background: linear-gradient(45deg, transparent 46%, currentColor 46% 54%, transparent 54%), linear-gradient(-45deg, transparent 46%, currentColor 46% 54%, transparent 54%);
}
.command {
    flex: none;
    display: flex;
    align-items: center;
    gap: 3px;
    margin-top: 2px;
    padding-left: 2px;
}
.command label {
    width: 60px;
}
.command input {
    flex: 1;
    min-width: 0;
    height: 19px;
}
.command input, .timeout input {
    background: #fff;
    border: 1px solid #8a8a8a;
    border-right-color: #e3e3e3;
    border-bottom-color: #e3e3e3;
}

/* scroll bars */
.scroll {
    flex: none;
    display: flex;
}
.vertical {
    flex-direction: column;
    width: 17px;
}
.horizontal {
    height: 17px;
    margin-right: 17px;
}
.trough {
    flex: 1;
    display: flex;
    flex-direction: inherit;
    background: repeating-conic-gradient(#fff 0 25%, #e9e9e9 0 50%) 0 0 / 2px 2px;
}
.arrow, .thumb, .viewbar button, .option-menu {
    background: #f0f0f0;
    border: 1px solid;
    border-color: #fff #696969 #696969 #fff;
    box-shadow: inset -1px -1px #a0a0a0;
}
.arrow {
    flex: none;
    width: 16px;
    height: 16px;
    display: flex;
    align-items: center;
    justify-content: center;
}
.arrow::before {
    content: "";
    border: 4px solid transparent;
}
.up::before {
    border-bottom-color: #000;
    border-top: 0;
}
.down::before {
    border-top-color: #000;
    border-bottom: 0;
}
.left::before {
    border-right-color: #000;
    border-left: 0;
}
.right::before {
    border-left-color: #000;
    border-right: 0;
}
.disabled .up::before {
    border-bottom-color: #999;
}
.disabled .down::before {
    border-top-color: #999;
}
.vertical .thumb {
    width: 16px;
    height: 34px;
    margin-top: 240px;
}
.horizontal .thumb {
    width: 64px;
    height: 17px;
    margin-left: 60.5%;
}

/* canvas */
.view {
    flex: 1;
    min-width: 0;
    display: flex;
    flex-direction: column;
    padding: 1px 1px 2px 3px;
}
.viewbar {
    flex: none;
    height: 25px;
    display: flex;
    align-items: center;
    gap: 1px;
}
.viewbar button {
    width: 22px;
    height: 23px;
    display: flex;
    align-items: center;
    justify-content: center;
}
.viewbar .on {
    background: #fff;
    border-color: #696969 #fff #fff #696969;
    box-shadow: inset 1px 1px #a0a0a0;
}
.viewbar .grey {
    background: #f6f6f6;
}
.viewbar .on, .viewbar .on ~ button {
    width: 23px;
}
.legend {
    width: 34px;
    padding-left: 2px;
    margin-left: 3px;
    border-left: 1px solid #8a8a8a;
}
.on ~ .legend {
    width: 38px;
    margin-left: 4px;
}
.option-menu {
    position: relative;
    width: 56px;
    height: 23px;
}
.option-menu select {
    width: 100%;
    height: 100%;
    padding-left: 2px;
    appearance: none;
}
.indicator {
    position: absolute;
    right: 6px;
    top: 8px;
    width: 15px;
    height: 6px;
    pointer-events: none;
    border: 1px solid;
    border-color: #fff #696969 #696969 #fff;
}
.timeout {
    margin-left: auto;
    display: flex;
    align-items: center;
    gap: 2px;
}
.timeout input {
    width: 26px;
    height: 22px;
    padding-left: 2px;
    margin-left: 2px;
}
.timeout button {
    width: 22px;
    font: 13px/16px "DejaVu Sans", sans-serif;
}
.canvas-row {
    flex: 1;
    min-height: 0;
    display: flex;
}
.canvas {
    flex: 1;
    min-width: 0;
    overflow: hidden;
    background: #fff;
    border: 2px solid #696969;
    border-right-width: 1px;
}

/* status bar */
.statusbar {
    flex: none;
    height: 23px;
    display: flex;
    align-items: center;
    gap: 1px;
    padding: 0 1px;
}
.message {
    flex: 1;
    color: #00008b;
}
.coord {
    width: 75px;
    height: 21px;
    padding: 1px 1px;
    color: #8b0000;
    border: 2px solid;
    border-color: #8a8a8a #fff #fff #8a8a8a;
}

/* taskbar */
.taskbar {
    flex: none;
    height: 41px;
    display: flex;
    gap: 3px;
    border-top: 1px solid #32404f;
    background: linear-gradient(90deg, #8ba1b9 58px, #b2cfea 62px, #b2cfea calc(100% - 290px), #8aa0b6 calc(100% - 245px));
}
.start {
    width: 57px;
    padding-right: 4px;
    display: flex;
    align-items: center;
    justify-content: center;
}
.task {
    position: relative;
    width: 59px;
    display: flex;
    align-items: center;
    justify-content: center;
    border: 1px solid transparent;
}
.task.open {
    border-color: #41566d;
    border-radius: 3px;
    background: linear-gradient(150deg, #e8f1fb, #c3d8ee 50%, #b0cbe8);
    box-shadow: inset 0 0 0 1px #e3eefa;
}
.task.stacked {
    width: 52px;
    margin-right: 7px;
}
.task.stacked::after {
    content: "";
    position: absolute;
    left: 100%;
    top: 0;
    width: 8px;
    height: 38px;
    border: 1px solid #6b819b;
    border-left: 4px double #6b819b;
    border-radius: 0 3px 3px 0;
    background: #c9dcf0;
}
.tray {
    margin-left: auto;
    display: flex;
    align-items: center;
    gap: 8px;
    color: #fff;
}
.lang {
    margin: -6px 8px 0 0;
}
.clock {
    width: 64px;
    margin-left: 6px;
    text-align: center;
    line-height: 17px;
}
.desktop {
    width: 15px;
    height: 40px;
    border: 1px solid #51657b;
    background: linear-gradient(150deg, #c5d3e0, #7b92ab 50%, #a9c4dd);
}
```
FILE: plot.js
```js
// isometric view, one grid square = 10 mm
const plot = document.getElementById('plot');
const ORIGIN = [591.5, 236.5];
const DX = 118;
const DY = 68;

function project(x, y, drop = 0) {
    return [ORIGIN[0] + (x + y) * DX, ORIGIN[1] + (x - y) * DY + drop];
}

function add(points, color, width = 1, dash = '') {
    const line = document.createElementNS('http://www.w3.org/2000/svg', 'polyline');
    line.setAttribute('points', points.map(p => p.join(',')).join(' '));
    line.setAttribute('stroke', color);
    line.setAttribute('stroke-width', width);
    line.setAttribute('stroke-dasharray', dash);
    plot.appendChild(line);
    return line;
}

// arc of radius 1 round (cx, cy), angles in degrees, going down from z0 to z1
function arc(cx, cy, from, to, z0, z1) {
    const steps = Math.abs(to - from) / 10;
    const points = [];
    for (let i = 0; i <= steps; i++) {
        const a = (from + (to - from) * i / steps) * Math.PI / 180;
        points.push(project(cx + Math.cos(a), cy + Math.sin(a), z0 + (z1 - z0) * i / steps));
    }
    return points;
}

// axes
add([project(0, 0), project(-4, 0)], 'orange', 1, '4 4');
add([project(0, 0), project(0, -5)], 'orange', 1, '4 4');

// margins
add([project(-2, -3), project(1, -3), project(1, 1), project(-2, 1), project(-2, -3)], 'magenta');

// grid
for (let i = -2; i <= 2; i++) {
    add([project(i, -3), project(i, 1)], '#bebebe', 1, '4 3');
}
for (let j = -3; j <= 1; j++) {
    add([project(-2, j), project(2, j)], '#bebebe', 1, '4 3');
}

add([project(0, 0), project(1, 0)], 'red', 1, '4 2');
add([project(0, 0), project(0, 1)], 'lime', 1, '5 3');
add([project(0, 0), [ORIGIN[0], ORIGIN[1] - 136]], 'blue', 1, '4 3');
add([[709, 304], [699, 303], [702, 298]], 'red').setAttribute('fill', 'red');
add([[709, 169], [698, 171], [702, 175]], 'lime').setAttribute('fill', 'lime');
add([[591.5, 101], [588, 109], [595, 109]], 'blue').setAttribute('fill', 'blue');

// circle
const circleTop = project(0, -2);
add([[circleTop[0], circleTop[1] - 41], ...arc(-1, -2, 0, -720, 0, 82)], 'black');

// two semicircles
const semiTop = project(-1, 0);
add([
    [semiTop[0], semiTop[1] - 42],
    ...arc(0, 0, 180, 0, 0, 20),
    ...arc(0, 0, 0, 180, 20, 41),
    ...arc(0, 0, 180, 0, 41, 61),
    ...arc(0, 0, 0, 180, 61, 82)
], 'blue', 2);

// cutter
const ring = [];
for (let a = 0; a <= 360; a += 15) {
    ring.push([591.5 + 17 * Math.cos(a * Math.PI / 180), 185 + 8 * Math.sin(a * Math.PI / 180)]);
}
add(ring, 'red', 2);
add([[575, 187], ORIGIN, [608, 187]], 'red', 2);
```
